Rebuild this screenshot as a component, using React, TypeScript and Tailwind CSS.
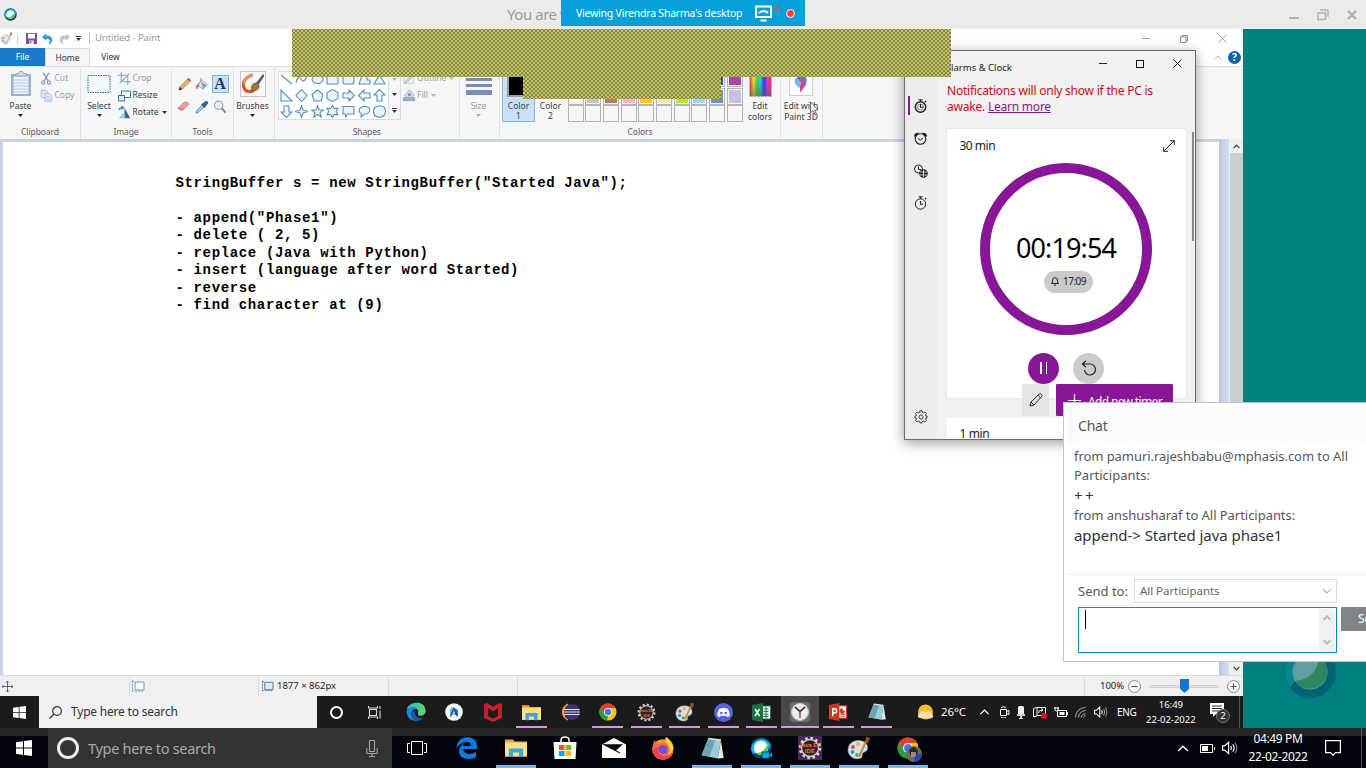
import React from "react";

type P = { children?: React.ReactNode; w?: number; h?: number; vb?: string; className?: string };
const Ic = ({ children, w = 16, h = 16, vb = "0 0 16 16", className = "" }: P) => (
  <svg width={w} height={h} viewBox={vb} fill="none" className={"block shrink-0 " + className}>
    {children}
  </svg>
);

const Tri = ({ c = "#333" }: { c?: string }) => (
  <Ic w={5} h={3} vb="0 0 5 3"><path d="M0 0h5L2.5 3z" fill={c} /></Ic>
);

const Chev = ({ w = 10, h = 6, c = "#888", s = 1.2, up = false }: { w?: number; h?: number; c?: string; s?: number; up?: boolean }) => (
  <Ic w={w} h={h} vb="0 0 10 6"><path d={up ? "M.8 5.2 5 1l4.2 4.2" : "M.8.8 5 5 9.2.8"} stroke={c} strokeWidth={s} /></Ic>
);

const WinLogo = ({ s = 13 }: { s?: number }) => (
  <Ic w={s} h={s}><path d="M0 2.3 7 1.2v6.4H0zM8 1.05 16 0v7.6H8zM0 8.5h7v6.4L0 13.8zM8 8.5h8V16l-8-1.1z" fill="#fff" /></Ic>
);

const Palette = ({ s = 24, o = 1 }: { s?: number; o?: number }) => (
  <Ic w={s} h={s} vb="0 0 24 24">
    <g opacity={o}>
      <path d="M1 14C1 8 6 4 12 4.5c6 .3 9 4 8.500 8-.6 4-4 3-5 5-.8 2 .5 4-2.500 5C7 24 1 20 1 14z" fill="#d5e2ee" stroke="#7f99ad" strokeWidth=".6" />
      <circle cx="6" cy="11" r="1.9" fill="#e0492f" /><circle cx="11" cy="8" r="1.9" fill="#f0b323" />
      <circle cx="5.5" cy="16" r="1.9" fill="#3d8bd6" /><circle cx="10" cy="19" r="1.9" fill="#4bae4f" />
      <path d="m12 21 7-16" stroke="#d08a45" strokeWidth="2.2" /><path d="m18 6 1-5.500 4 1.500-2 5z" fill="#8a552c" />
    </g>
  </Ic>
);

const Folder = ({ w = 22, h = 19 }: { w?: number; h?: number }) => (
  <Ic w={w} h={h} vb="0 0 22 19">
    <path d="M0 1h8l1.500 2H22v15H0z" fill="#e8a92b" /><path d="M0 4h22v14H0z" fill="#fedf85" />
    <path d="M4 10h14v8.500h-4V14H8v4.500H4z" fill="#3aa5dc" />
  </Ic>
);

const Chrome = ({ s = 18 }: { s?: number }) => (
  <Ic w={s} h={s} vb="0 0 20 20">
    <circle cx="10" cy="10" r="9.5" fill="#fbc116" />
    <path d="M1.8 5.200A9.500 9.500 0 0 1 18.300 5.500H10L6 12.300z" fill="#e33b2e" />
    <path d="M1.800 5.200 6 12.300 10 14.500 9 19.500A9.500 9.500 0 0 1 1.800 5.200z" fill="#269f42" />
    <circle cx="10" cy="10" r="4.5" fill="#fff" /><circle cx="10" cy="10" r="3.6" fill="#3f7de8" />
  </Ic>
);

const Notepad = ({ s = 20 }: { s?: number }) => (
  <Ic w={s} h={s} vb="0 0 22 22">
    <path d="M7 1.500 19 3l-3 17.500L.5 17.500z" fill="#9ccdd7" /><path d="M7 1.500 14 2.200 8 19 .5 17.500z" fill="#6aa5b3" />
    <path d="m19 3 2.700 17-5.700.5z" fill="#e6e8e8" /><path d="M7 1.500 19 3" stroke="#ddd" strokeWidth="1.5" />
  </Ic>
);

const Webex = ({ s = 22, cam = false }: { s?: number; cam?: boolean }) => (
  <Ic w={s} h={s} vb="0 0 22 22">
    <circle cx="11" cy="11" r="10.5" fill="#07466a" />
    <path d="M1 12A10.500 10.500 0 0 1 21 8L18 13 3 17z" fill="#04b4e8" />
    <circle cx="11" cy="11" r="7.200" fill="#fff" /><path d="M17 7.500A7 7 0 0 1 6 16c6 0 9-3 11-8.500z" fill="#6cc04a" />
    {cam && <g><rect x="12" y="15" width="7.5" height="6.500" rx="1" fill="#00a8e8" stroke="#02050b" strokeWidth=".6" /><path d="m19 18 3-2.500V21z" fill="#00a8e8" /></g>}
  </Ic>
);

const Gear = ({ s = 18, sq = false }: { s?: number; sq?: boolean }) => (
  <Ic w={s} h={s} vb="0 0 24 24">
    {sq && <path d="M0 0h24v24H0z" fill="#46285f" />}
    <circle cx="12" cy="12" r="10" stroke="#d5d5d5" strokeWidth="2.6" strokeDasharray="2.6 2.64" />
    <circle cx="12" cy="12" r="8.5" stroke="#d5d5d5" strokeWidth="1.3" fill="#2c2127" />
    <text x="12" y="11" fontSize={sq ? 5.6 : 4.6} fontWeight="700" textAnchor="middle" fill="#f2742c" fontFamily="Liberation Sans">Java EE</text>
    <text x="12" y="17.2" fontSize={sq ? 6.2 : 5} fontWeight="700" textAnchor="middle" fill="#f2742c" fontFamily="Liberation Sans">IDE</text>
  </Ic>
);

const Speaker = ({ w = 15, o = false }: { w?: number; o?: boolean }) => (
  <Ic w={w} h={w * 13 / 15} vb="0 0 15 13">
    <path d="M.6 4.500h2L6.200 1.200v10.600L2.600 8.500h-2z" stroke="#fff" strokeWidth="1.1" />
    <path d="M8.200 4.500q1.400 2 0 4" stroke="#fff" strokeWidth="1.1" />
    <path d="M10.200 3q2.300 3.500 0 7" stroke="#fff" strokeWidth="1.1" opacity={o ? 0.6 : 1} />
    <path d="M12.200 1.500q3.300 5 0 10" stroke="#fff" strokeWidth="1.1" opacity=".5" />
  </Ic>
);

/* ---------- Paint ribbon ---------- */
const Group = ({ label, w, children }: { label?: string; w: string; children: React.ReactNode }) => (
  <div className={"flex h-[71px] shrink-0 flex-col border-r border-[#dfe1e4] " + w}>
    <div className="flex h-[58px] w-full">{children}</div>
    <div className="text-center leading-[12px] tracking-[-0.1px] text-[#5a5a5a]">{label}</div>
  </div>
);

const BigBtn = ({ icon, lines, arrow, w, dim = false }: { icon: React.ReactNode; lines: string[]; arrow?: boolean; w: string; dim?: boolean }) => (
  <div className={"flex shrink-0 flex-col items-center " + w + (dim ? " text-[#9a9a9a]" : " text-[#3c3c3c]")}>
    <div className="flex h-[31.5px] items-center pt-[1px]">{icon}</div>
    {lines.map((l) => <div key={l} className="leading-[11px] whitespace-nowrap">{l}</div>)}
    {arrow && <div className="pt-[3px]"><Tri c={dim ? "#aaa" : "#222"} /></div>}
  </div>
);

const Row = ({ icon, t, dim, arrow }: { icon: React.ReactNode; t: string; dim?: boolean; arrow?: boolean }) => (
  <div className={"flex h-[17px] items-center whitespace-nowrap " + (dim ? "text-[#9c9c9c]" : "text-[#3c3c3c]")}>
    <div className="flex w-[14.5px] justify-start">{icon}</div>{t}
    {arrow && <div className="ml-[3px]"><Tri c={dim ? "#bbb" : "#333"} /></div>}
  </div>
);

const shapePaths = [
  "M1 2l11 9", "M1 10Q3 1 6 6T12 3", "M6.5 2.5a5.5 4 0 1 0 .1 0z", "M1 3h11v8H1z", "M3 3h7q2 0 2 2v4q0 2-2 2H3q-2 0-2-2V5q0-2 2-2z", "M1 11 4 2h5v5h3v4z", "M6.5 2 12 11H1z",
  "M1 1v11h11z", "M6.5.5 12 6.5l-5.5 6-5.5-6z", "M6.5 1 12 5.2 10 12H3L1 5.2z", "M6.5.5 12 3.5v6L6.5 12.5 1 9.5v-6z", "M1 4h6V1l5.5 5.5L7 12V9H1z", "M12 4H6V1L.5 6.5 6 12V9h6z", "M4 12V6H1L6.5.5 12 6H9v6z",
  "M4 1v6H1l5.5 5.5L12 7H9V1z", "M6.5.5 8 5l4.5 1.5L8 8l-1.500 4.500L5 8 .5 6.500 5 5z", "M6.5.5 8 5h4.500L9 7.700l1.400 4.500-3.900-2.700-3.900 2.700L4 7.700.5 5H5z", "M6.5.5 8.300 3.400H12L10.200 6.500 12 9.600H8.300L6.500 12.500 4.700 9.600H1L2.800 6.500 1 3.400h3.700z", "M1 1.500h11v7.500H6L3.500 12V9H1z", "M6.5 1.500c7 0 7 7.500 0 7.500L3 12l.5-3.500C-.5 7 .5 1.500 6.500 1.500z", "M4 1.500q2.500-1.500 5 0 3 0 3 3 1 2 0 4-1 3-3 3-2.500 1.500-5 0-3 0-3-3-1-2 0-4 0-3 3-3z",
];

const palette = [
  "#000000", "#7f7f7f", "#880015", "#ed1c24", "#ff7f27", "#fff200", "#22b14c", "#00a2e8", "#3f48cc", "#a349a4",
  "#ffffff", "#c3c3c3", "#b97a57", "#ffaec9", "#ffc90e", "#efe4b0", "#b5e61d", "#99d9ea", "#7092be", "#c8bfe7",
  ...Array(10).fill("#f5f6f7"),
];

const Ribbon = () => (
  <div className="flex h-[73px] border-t border-[#dcdde0] bg-[#f5f6f7] pt-[1px] text-[8.5px]">
    <Group w="w-[81px]" label="Clipboard">
      <BigBtn w="w-[40px] pl-[1px]" lines={["Paste"]} arrow icon={
        <Ic w={22} h={26} vb="0 0 22 26"><path d="M1 3h20v22H1z" fill="#9fb0cf" /><path d="M3.5 5.500h15v17.500h-15z" fill="#eef3fb" /><path d="M3.5 9h15M3.5 12h15M3.5 15h15M3.5 18h15M3.5 21h15" stroke="#b6c9e6" /><path d="M6 5V2.500h2.500L9.500.5h3l1 2H16V5z" fill="#d6dbe3" stroke="#8492a8" strokeWidth=".7" /></Ic>} />
      <div className="pt-[2px]">
        <Row dim t="Cut" icon={<Ic w={13} h={13}><path d="m4 1 6 10M11 1 5 11" stroke="#8da0bd" strokeWidth="1.8" /><circle cx="4" cy="13" r="2" stroke="#8da0bd" strokeWidth="1.4" /><circle cx="11" cy="13" r="2" stroke="#8da0bd" strokeWidth="1.4" /></Ic>} />
        <Row dim t="Copy" icon={<Ic w={13} h={13}><path d="M1.5 1.500h6l2 2v7h-8z" fill="#eef2f9" stroke="#9dafcd" /><path d="M6.5 5.500h5l3 3v6.500h-8z" fill="#eef2f9" stroke="#9dafcd" /><path d="M8 9h4M8 11h5M8 13h5M3 4h3M3 6h3" stroke="#9dafcd" strokeWidth=".8" /></Ic>} />
      </div>
    </Group>
    <Group w="w-[91px]" label="Image">
      <BigBtn w="w-[36px]" lines={["Select"]} arrow icon={<Ic w={24} h={20} vb="0 0 24 20"><path d="M1 1.500h22v17H1z" fill="#f3f7fc" stroke="#2f6499" strokeDasharray="1.5 1" /></Ic>} />
      <div className="pt-[2px] pl-[1px]">
        <Row dim t="Crop" icon={<Ic w={13} h={13}><path d="M4 0v12h12M0 4h12v12M2 14 14 2" stroke="#8ea4c0" strokeWidth="1.3" /></Ic>} />
        <Row t="Resize" icon={<Ic w={13} h={12} vb="0 0 13 12"><path d="M3.5 1h9v6.500h-9z" fill="#fff" stroke="#3b74ad" /><path d="M.5 5.500h6V11h-6z" fill="#dceafa" stroke="#3b74ad" /></Ic>} />
        <Row arrow t="Rotate" icon={<Ic w={13} h={13}><path d="M1 15h6V8z" fill="#9bc0df" /><path d="M8 15V2l7 13z" fill="#35679b" /><path d="M1 5q1-3 5-3M4 0l3 2-3 2" stroke="#1d86d4" strokeWidth="1.3" /></Ic>} />
      </div>
    </Group>
    <Group w="w-[62px]" label="Tools">
      <div className="grid h-[58px] grid-cols-[18px_18px_18px] grid-rows-[22px_23px] place-items-center content-start pt-[5px] pl-[3px]">
        <Ic w={15} h={15}><path d="M2 14 3 10.500 12 1.500l2.500 2.500L5.500 13z" fill="#e8b469" stroke="#8b6843" strokeWidth=".7" /><path d="m2 14 1-3.500L5.500 13z" fill="#333" /><path d="m11 2.500 2.500 2.500L15 3.500 12.500 1z" fill="#a85a6a" /></Ic>
        <Ic w={14} h={14}><path d="m8 3 6 6-5 5-6-5z" fill="#dbe8f4" stroke="#8a97a8" /><path d="M5 6 1 10q0 4 2 4 1-3 2-5z" fill="#e0764a" /><path d="m7 6 6 3-4 4z" fill="#6f9fd0" /><path d="M7 1q-2 3 1 6" stroke="#999" /></Ic>
        <div className="flex h-[18px] w-[17px] items-center justify-center border border-[#84b2dd] bg-[#c9e0f7] font-['Liberation_Serif'] text-[16px] leading-none font-bold text-[#1d3350]">A</div>
        <Ic w={14} h={15}><path d="M1 10 8 3q4-1 6 2l-7 7q-4 1-6-2z" fill="#ee9a9c" stroke="#c67478" strokeWidth=".7" /><path d="M1 10q3-1 6 2" stroke="#c67478" /></Ic>
        <Ic w={14} h={14}><path d="m1 15 1-3 6-6 2 2-6 6z" fill="#a9d0ef" stroke="#45698c" strokeWidth=".8" /><path d="m7 5 4 4 1-1 .5-1.500L15 4q.5-3-3-3L9.500 3.500 8 4z" fill="#2b5d93" /></Ic>
        <Ic w={14} h={14}><circle cx="6.5" cy="6" r="4.7" fill="#e7f1fa" stroke="#97a5b5" strokeWidth="1.3" /><path d="m10 9.500 4.500 5" stroke="#a98366" strokeWidth="2.4" /></Ic>
      </div>
    </Group>
    <Group w="w-[40.5px]">
      <BigBtn w="w-[37px]" lines={["Brushes"]} arrow icon={
        <Ic w={26} h={26} vb="0 0 27 27" className="border border-[#c3c7cc]"><path d="M0 0h27v27H0z" fill="#fcf7f3" /><path d="M13 3Q1 8 3 16q1 7 9 6l5-5" stroke="#da5427" strokeWidth="3.5" /><path d="M13 3Q4 6 3 13" stroke="#f29b74" strokeWidth="2" /><path d="m25 2-8 10 3 2 6-9z" fill="#536273" /><path d="M12 16q2-5 7-3 3 4-1 7-5 3-7 1 1-2 1-5z" fill="#a3703f" stroke="#765230" /></Ic>} />
    </Group>
    <Group w="w-[185.5px]" label="Shapes">
      <div className="mt-[3px] ml-[3px] flex h-[49px] w-[123px] shrink-0 border border-[#d8dce1] bg-white">
        <div className="grid w-[109px] grid-cols-7 grid-rows-3 place-items-center">
          {shapePaths.map((d, i) => <Ic key={i} w={13} h={13} vb="0 0 13 13"><path d={d} fill={i > 1 ? "#eaf4fb" : "none"} stroke="#5b8fb5" strokeWidth="1.1" /></Ic>)}
        </div>
        <div className="flex flex-1 flex-col items-center justify-around border-l border-[#d8dce1] bg-[#f4f6f9]">
          <Tri c="#bbb" /><Tri /><div className="flex flex-col items-center gap-[1px]"><div className="h-[1px] w-[5px] bg-[#345]" /><Tri c="#345" /></div>
        </div>
      </div>
      <div className="pt-[2px] pl-[2px]">
        <Row dim arrow t="Outline" icon={<Ic w={13} h={13}><path d="M1 3h12v11H1z" stroke="#bcc8d8" /><path d="m2 14 1-3 10-10 2 2L5 13z" fill="#c9d3e0" stroke="#a9b6c9" /></Ic>} />
        <Row dim arrow t="Fill" icon={<Ic w={13} h={13}><path d="m8 1 6 6-5 6-7-5z" fill="#d3dbe7" stroke="#9faec6" /><path d="M0 10h15v5H0z" fill="#9cabc7" /><circle cx="8" cy="7" r="2" fill="#8597b7" /></Ic>} />
      </div>
    </Group>
    <Group w="w-[40px]">
      <BigBtn dim w="w-[37px]" lines={["Size"]} arrow icon={
        <div className="flex h-[27px] w-[26px] flex-col justify-end gap-[3px] pb-[3px]"><div className="h-[3px] bg-[#7a8cb3]" /><div className="h-[3px] bg-[#7a8cb3]" /><div className="h-[5px] bg-[#7a8cb3]" /></div>} />
    </Group>
    <Group w="w-[281px]" label="Colors">
      <div className="mt-[3px] ml-[2px] flex h-[51px] w-[33px] shrink-0 flex-col items-center border border-[#8ab8e6] bg-[#c9e0f7] text-[#3c3c3c]">
        <div className="mt-[2px] mb-[3px] h-[23px] w-[23px] shrink-0 border-2 border-[#9a9da0] bg-black" />
        <div className="leading-[11px]">Color</div><div className="leading-[10px]">1</div>
      </div>
      <div className="mt-[3px] flex h-[51px] w-[31px] shrink-0 flex-col items-center text-[#3c3c3c]">
        <div className="mt-[5px] mb-[3px] h-[21px] w-[18px] shrink-0 border border-[#aaa] bg-white" />
        <div className="leading-[11px]">Color</div><div className="leading-[10px]">2</div>
      </div>
      <div className="mt-[2px] ml-[1.5px] grid w-[177px] shrink-0 grid-cols-10 grid-rows-[17.5px_17.5px_17.5px]">
        {palette.map((c, i) => <div key={i} className="h-[17px] w-[16px] border border-[#b4b4b4] p-[1px]"><div className="h-full w-full" style={{ background: c }} /></div>)}
      </div>
      <BigBtn w="w-[31px]" lines={["Edit", "colors"]} icon={
        <div className="mt-[2px] h-[23px] w-[23px] border border-[#bbb] bg-[linear-gradient(to_bottom,transparent_20%,rgba(90,90,90,.55)),linear-gradient(to_right,#f33,#fd3,#3d4,#2cd,#33f,#d3d,#f34)]" />} />
    </Group>
    <Group w="w-[42px]">
      <BigBtn w="w-[40px]" lines={["Edit with", "Paint 3D"]} icon={
        <Ic w={24} h={24} vb="0 0 25 25" className="border border-[#ccc] bg-white"><path d="M12.5 1C19 3 20 8 18 13l-6 9-1-6c-5-3-6-6-5-9z" fill="#5d6fe4" /><path d="M6 7q6-3 12 6l-6 9-1-6Q5 12 6 7z" fill="#d4467f" /><path d="M6 7q4-1 7 5l-2 4Q5 12 6 7z" fill="#64c3ee" /></Ic>} />
    </Group>
  </div>
);

const PaintWindow = () => (
  <div className="flex h-[667px] flex-col bg-white">
    <div className="flex h-[19px] items-center text-[9.5px] text-[#999]">
      <Palette s={13} o={0.7} />
      <div className="ml-[4px] h-[10px] w-px bg-[#ccc]" />
      <Ic w={11} h={11} className="ml-[8px]"><path d="M0 0h16v16H0z" fill="#7553a0" /><path d="M3 1h10v7H3zM5 11h6v5H5z" fill="#fff" /><path d="M6 12h2v3H6z" fill="#7553a0" /></Ic>
      <Ic w={11} h={12} className="ml-[5px]"><path d="m0 5 6-5v3q9-1 9 7-1 5-6 6 3-4 2-6-1-2-5-2v3z" fill="#3b9edb" /></Ic>
      <Ic w={11} h={12} className="ml-[6px]"><path d="m16 5-6-5v3Q1 2 1 10q1 5 6 6-3-4-2-6 1-2 5-2v3z" fill="#bcc5d4" /></Ic>
      <div className="ml-[6px] flex flex-col items-center gap-[1px]"><div className="h-px w-[5px] bg-[#333]" /><Tri /></div>
      <div className="ml-[8px] h-[11px] w-px bg-[#bbb]" />
      <span className="ml-[5px] tracking-[-0.08px] whitespace-nowrap">Untitled - Paint</span>
      <div className="ml-auto flex items-center pr-[16px]">
        <div className="h-px w-[8px] bg-[#999]" />
        <Ic w={8} h={8} vb="0 0 8 8" className="ml-[30px]"><path d="M.5 2h5.500v5.500H.5zM2 2V.5h5.500V6H6" stroke="#888" /></Ic>
        <Ic w={9} h={9} vb="0 0 9 9" className="ml-[30px]"><path d="m.5.5 8 8m0-8-8 8" stroke="#999" /></Ic>
      </div>
    </div>
    <div className="flex h-[18px] text-center text-[8.5px] leading-[18px] text-[#333]">
      <div className="w-[45px] bg-[#1979ca] text-white">File</div>
      <div className="w-[45px] border-x border-t border-[#dcdde0] bg-[#f5f6f7] leading-[17px]">Home</div>
      <div className="w-[41px]">View</div>
      <div className="ml-auto flex items-center gap-[6px] pr-[2px]">
        <Chev up w={8} h={5} c="#aaa" />
        <div className="h-[13px] w-[13px] rounded-full bg-[#0f62ad] text-[10px] leading-[13px] font-bold text-white">?</div>
      </div>
    </div>
    <Ribbon />
    <div className="flex h-[536px] bg-[#c8d2e6]">
      <div className="mt-[3px] ml-[3px] w-[1215.5px] bg-white pt-[32.5px] pl-[172.5px]">
        <pre className="m-0 font-['Liberation_Mono',monospace] text-[14px] leading-[17.5px] font-bold tracking-[0.64px] text-black">{`StringBuffer s = new StringBuffer("Started Java");

- append("Phase1")
- delete ( 2, 5)
- replace (Java with Python)
- insert (language after word Started)
- reverse
- find character at (9)`}</pre>
      </div>
      <div className="w-[10.5px] bg-gradient-to-r from-[#bac7df] to-[#d5dff0]" />
      <div className="flex flex-1 flex-col items-center bg-[#f0f0f0]">
        <div className="flex h-[14px] items-center"><Chev up w={7} h={5} c="#444" s={1.8} /></div>
        <div className="w-[13px] flex-1 bg-[#cdcdcd]" />
        <div className="flex h-[14px] items-center"><Chev w={7} h={5} c="#444" s={1.8} /></div>
      </div>
    </div>
    <div className="flex h-[21px] items-center border-t border-[#d9d9d9] bg-[#f0f0f0] text-[9.5px] text-[#222]">
      <div className="flex h-full w-[130px] items-center border-r border-[#dcdcdc] pl-[2px]"><Ic w={11} h={11} vb="0 0 11 11"><path d="M5.5 0v11M0 5.500h11M4 1.500 5.500 0 7 1.500M4 9.500 5.500 11 7 9.500M1.500 4 0 5.500 1.500 7M9.500 4 11 5.500 9.500 7" stroke="#435a74" strokeWidth=".9" /></Ic></div>
      <div className="flex h-full w-[129px] items-center border-r border-[#dcdcdc] pl-[2px]"><Ic w={13} h={12} vb="0 0 13 12"><path d="M3 2h9v8H3z" fill="#f7fafc" stroke="#8495aa" /><path d="M.5 1v10M0 1h2M0 11h12" stroke="#8495aa" strokeDasharray="2 1" /></Ic></div>
      <div className="flex h-full w-[130px] items-center gap-[3px] border-r border-[#dcdcdc] pl-[3px] whitespace-nowrap"><Ic w={12} h={12} vb="0 0 13 12"><path d="M3 2h9v8H3z" fill="#dcebf6" stroke="#52708f" /><path d="M.5 1v10M0 1h2M0 11h12" stroke="#52708f" strokeDasharray="2 1" /></Ic><span>1877 × 862px</span></div>
      <div className="h-full w-[129px] border-r border-[#dcdcdc]" />
      <div className="ml-auto flex h-full w-[159px] items-center border-l border-[#dcdcdc] pl-[15px]">
        <span className="w-[28px]">100%</span>
        <Ic w={13} h={13} vb="0 0 13 13"><circle cx="6.5" cy="6.5" r="6" stroke="#888" fill="#f8f8f8" /><path d="M3.5 6.500h6" stroke="#555" strokeWidth="1.2" /></Ic>
        <div className="relative mx-[9px] h-[3px] w-[68px] border border-[#d0d0d0] bg-[#e6e6e6]"><Ic w={9} h={14} vb="0 0 9 14" className="absolute top-[-7px] left-[29px]"><path d="M0 0h9v10l-4.500 4L0 10z" fill="#0b76d6" /></Ic></div>
        <Ic w={13} h={13} vb="0 0 13 13"><circle cx="6.5" cy="6.5" r="6" stroke="#888" fill="#f8f8f8" /><path d="M3.5 6.500h6m-3-3v6" stroke="#555" strokeWidth="1.2" /></Ic>
      </div>
    </div>
  </div>
);

/* ---------- Shared-desktop taskbar ---------- */
const remoteApps: { el: React.ReactNode; line?: boolean; on?: boolean }[] = [
  { el: <Ic w={20} h={20} vb="0 0 20 20"><path d="M.5 10A9.500 9.500 0 0 1 10 .5q8.500 0 9.500 8 0 5-5.500 5-3-.3-1.700-2.300Q13 7 9 7q-4 1-3.500 5.500 1 5.500 7 6Q2 20 .5 10z" fill="#1a86d8" /><path d="M.8 7.500C3-1 18-2 19.500 8.500q0 5-5.500 5-3-.3-1.700-2.300Q12.500 5.500 7.500 5 2.500 5 .8 7.500z" fill="#3cc4a4" /><path d="M11 .5q8 1 8.500 8 0 5-5.500 5-2 0-1.700-1.500Q17 8 11 .5z" fill="#5fd267" /><path d="M6 9q-2.500 8 4.500 9.500 4 .8 7.500-3-1.500.8-4 .5-5-.8-5-5.500Q8 8 6 9z" fill="#1458a8" /></Ic> },
  { el: <Ic w={18} h={18} vb="0 0 18 18"><circle cx="9" cy="9" r="8.8" fill="#f4f8fa" /><path d="M5 12V6.500Q6 4 8.500 4v8" fill="#63b5e8" /><path d="M9.5 12V5l3.500 2v5z" fill="#2e78c5" /><path d="m5.500 13.500 3.500-8 3.500 8" stroke="#154a88" strokeWidth="1.300" /></Ic> },
  { el: <Ic w={18} h={19} vb="0 0 18 19"><path d="m0 1 3-1 6 4 6-4 3 1v14l-9 4-9-4zm4 4v8l5 2.500 5-2.500V5L9 8.500z" fill="#c3222c" fillRule="evenodd" /></Ic> },
  { el: <Folder w={19} h={17} />, line: true },
  { el: <Ic w={20} h={18} vb="0 0 20 18"><path d="M8 1a8.500 8.500 0 0 0 0 16Q0 13 8 1z" fill="#f6a11b" stroke="#f6a11b" /><circle cx="12" cy="9" r="8" fill="#3d3270" /><path d="M4 6.500h15.500M4 9h16M4 11.500h15.500" stroke="#e5e3f2" strokeWidth="1.2" /></Ic> },
  { el: <Chrome />, line: true },
  { el: <Gear s={19} />, line: true },
  { el: <Palette s={20} />, line: true },
  { el: <Ic w={19} h={19} vb="0 0 19 19"><circle cx="9.5" cy="9.5" r="9.5" fill="#5462e0" /><path d="M5 6q4.500-2 9 0 2 3.500 1.700 7-2 1.300-2.700 1l-.8-1.400q-2.700.7-5.400 0L6 14q-1-.1-2.700-1Q3 9.500 5 6z" fill="#fff" /><circle cx="7.3" cy="10" r="1.3" fill="#5462e0" /><circle cx="11.7" cy="10" r="1.3" fill="#5462e0" /></Ic>, line: true },
  { el: <Ic w={19} h={19} vb="0 0 19 19"><path d="M10 3h8.500v13H10z" fill="#fff" stroke="#237a4b" /><path d="M11.5 6h5M11.5 8.500h5M11.5 11h5M11.5 13.500h5M14 4v11" stroke="#237a4b" /><path d="m0 2 11-2v19L0 17z" fill="#1d7044" /><path d="m3 6 4.500 7M7.500 6 3 13" stroke="#fff" strokeWidth="1.5" /></Ic>, line: true },
  { el: <Ic w={20} h={20} vb="0 0 20 20"><rect width="20" height="20" rx="4" fill="#6a6f74" /><circle cx="10" cy="10" r="8.5" fill="#e9ebed" stroke="#b8bdc1" /><path d="m5 5 5 4.500L15 5" stroke="#222" strokeWidth="1.6" /><path d="M10 9v7" stroke="#a33" strokeWidth="1.4" /></Ic>, line: true, on: true },
  { el: <Ic w={18} h={18} vb="0 0 19 19"><path d="M10 3h8.500v13H10z" fill="#fff" stroke="#c9391d" /><path d="M12 12h5M12 14h5M14 6a2.500 2.500 0 1 0 2.500 2.500H14z" stroke="#c9391d" fill="#c9391d" /><path d="m0 2 11-2v19L0 17z" fill="#ca3a1e" /><path d="M4 14V6h2q2 0 2 2.300T6 10.500H4" stroke="#fff" strokeWidth="1.5" /></Ic>, line: true },
  { el: <Notepad s={18} />, line: true },
];

const RemoteTaskbar = () => (
  <div className="flex h-[32px] bg-[#1b1b1b] text-white">
    <div className="flex w-[39px] shrink-0 items-center justify-center"><WinLogo /></div>
    <div className="flex w-[278px] shrink-0 items-center bg-[#f1f1f1] pl-[10px] text-[12px] text-[#333]">
      <Ic w={13} h={13} vb="0 0 13 13"><circle cx="8" cy="5" r="4.3" stroke="#333" strokeWidth="1.2" /><path d="M5 8 .5 12.500" stroke="#333" strokeWidth="1.2" /></Ic>
      <span className="ml-[9px] tracking-[-0.2px] whitespace-nowrap">Type here to search</span>
    </div>
    <div className="flex w-[39px] shrink-0 items-center justify-center"><div className="h-[13px] w-[13px] rounded-full border-[2.5px] border-white" /></div>
    <div className="flex w-[38px] shrink-0 items-center justify-center"><Ic w={14} h={13} vb="0 0 14 13"><path d="M1.5 3.500h7v6h-7zM.5 0v2h9V0M.5 13v-2h9v2M12 4.500v8M12 0v3" stroke="#ddd" strokeWidth="1.1" /></Ic></div>
    <div className="ml-[2.8px] flex shrink-0">
      {remoteApps.map((a, i) => (
        <div key={i} className={"flex w-[38.4px] flex-col items-center " + (a.on ? "bg-[#484848]" : "")}>
          <div className="flex h-[30px] items-center pt-[2px]">{a.el}</div>
          {a.line && <div className={"h-[2px] bg-[#e58fe9] " + (a.on ? "w-full" : "w-[31px]")} />}
        </div>
      ))}
    </div>
    <div className="flex min-w-0 flex-1 items-center text-[11px]">
      <Ic w={17} h={16} vb="0 0 17 16" className="ml-[21px]"><circle cx="8.5" cy="8" r="7.5" fill="#fbb929" /><path d="M2 14q-3-3 1-5 2-4 6-1 5-2 6 2 3 3-1 4.500z" fill="#f6dca8" /></Ic>
      <span className="ml-[7px] w-[38px] shrink-0 text-[11.5px] tracking-[-0.05px]">26°C</span>
      <Chev up w={11} h={6} c="#fff" />
      <div className="ml-[10px] flex w-[108px] shrink-0 items-center justify-between">
        <Ic w={10} h={12} vb="0 0 10 12"><path d="M.5 3.500h6v6h-6zM6.5 5.500 9 4.500v4l-2.500-1M1 1.500q2.500-1.500 5 0M1 11.500q2.500 1 5 0" stroke="#fff" /></Ic>
        <Ic w={8} h={13} vb="0 0 8 13"><rect x="1" width="6" height="9" rx="1.5" fill="#eee" /><path d="M0 8h8v2H5v2h1v1H2v-1h1v-2H0z" fill="#ccc" /></Ic>
        <Ic w={14} h={13} vb="0 0 14 13"><path d="M.5 2.500 4 1.500V10L.5 11zM4 1.500h8.500v8H4" stroke="#eee" /><path d="M5.5 7q0-3 4-3M8 2.500 10 4 8 5.500" stroke="#eee" /><circle cx="11" cy="10" r="3" fill="#e81123" /></Ic>
        <Ic w={14} h={11} vb="0 0 14 11"><path d="M3.5 3.500h9v6h-9zM13.5 5v3" stroke="#fff" /><path d="M5.5 5h5v3h-5z" fill="#fff" /><path d="M0 1h5M1 0v3q1 2 3 0V0" stroke="#fff" /></Ic>
        <Ic w={11} h={11} vb="0 0 11 11"><path d="M.5 10.500Q1 1 10.500.5M3.500 10.500Q4 4 10.500 3.500M6 10.500Q6.500 7 10.500 6.500M8.500 10.500q0-1.500 2-2" stroke="#aaa" /></Ic>
        <Speaker w={14} o />
      </div>
      <span className="ml-[9px] w-[25px] shrink-0 text-[10px] tracking-[-0.3px]">ENG</span>
      <div className="w-[58px] shrink-0 text-center text-[9.5px] leading-[15px] whitespace-nowrap">16:49<br />22-02-2022</div>
      <div className="relative ml-[10px] h-[18px] w-[20px] shrink-0">
        <Ic w={14} h={14} vb="0 0 14 14"><path d="M0 0h14v11H6l-3 3v-3H0z" fill="#fff" /><path d="M2 3h10M2 5.500h10M2 8h7" stroke="#333" strokeWidth="1.2" /></Ic>
        <div className="absolute top-[6px] left-[6px] h-[14px] w-[14px] rounded-full border border-[#777] bg-[#333] text-center text-[9.5px] leading-[12px]">2</div>
      </div>
      <div className="mr-[3px] ml-auto h-full w-px bg-[#555]" />
    </div>
  </div>
);

/* ---------- Alarms & Clock ---------- */
const Watch = ({ bold = false }: { bold?: boolean }) => (
  <Ic w={13} h={14} vb="0 0 13 14"><circle cx="6.5" cy="8" r="5.2" stroke="#222" strokeWidth={bold ? 1.5 : 1} />{bold && <circle cx="6.5" cy="8" r="3" stroke="#222" strokeWidth=".5" />}<path d="M6.5 5v3.200H9M4.500.8h4M6.500 1v2M11 2l1.300 1.300" stroke="#222" strokeWidth="1.1" /></Ic>
);

const ClockWindow = () => (
  <div className="absolute top-[50px] left-[904px] flex h-[390px] w-[292px] overflow-hidden border border-[#6c6c6c] bg-[#f1f1f1] shadow-[0_3px_12px_rgba(0,0,0,.4)]">
    <div className="flex w-[32px] shrink-0 flex-col items-center bg-[#ededed] pt-[48px] pr-[1px]">
      <div className="relative"><div className="absolute top-[-3px] left-[-6px] h-[19px] w-[2px] bg-[#881798]" /><Watch bold /></div>
      <Ic w={13} h={13} vb="0 0 13 13" className="mt-[19px]"><circle cx="6.5" cy="7" r="5.3" stroke="#222" strokeWidth="1.1" /><path d="M4 6.500l2.500 1.500 2.500-2" stroke="#222" /><path d="M.3 5Q-.5.3 5.500.8zM12.700 5Q13.500.3 7.500.8z" fill="#111" /></Ic>
      <Ic w={14} h={14} vb="0 0 14 14" className="mt-[19px]"><circle cx="4.5" cy="5" r="4" stroke="#222" /><path d="M4.5 2.500V5.500H7" stroke="#222" /><circle cx="9.5" cy="9.5" r="4.3" fill="#222" /><path d="M6 8h7M6 11h7M9.500 6v7" stroke="#eee" strokeWidth=".8" /></Ic>
      <div className="mt-[18px]"><Watch /></div>
      <Ic w={14} h={14} vb="0 0 24 26" className="mt-auto mb-[15px]"><path d="M10 1.500h4l.6 3 2 .9 2.700-1.700 2.800 2.800L20.400 9.200l.8 2h2v3.600h-2l-.8 2 1.700 2.700-2.800 2.800-2.700-1.700-2 .9-.6 2.500h-4l-.6-2.500-2-.9-2.700 1.700-2.800-2.800 1.700-2.700-.9-2H1v-3.600h1.700l.9-2L1.900 6.500l2.800-2.800 2.700 1.700 2-.9z" stroke="#222" strokeWidth="1.6" /><circle cx="12" cy="13" r="3.8" stroke="#222" strokeWidth="1.6" /></Ic>
    </div>
    <div className="flex flex-1 flex-col pl-[10px]">
      <div className="flex h-[28px] shrink-0 items-start pt-[8px] text-[9.5px] leading-[17px] text-[#222]">
        <span className="ml-[-2px] w-[80px] whitespace-nowrap">Alarms &amp; Clock</span>
        <div className="ml-auto flex items-center gap-[29px] pr-[13px]">
          <div className="h-px w-[8px] bg-[#222]" />
          <div className="h-[8px] w-[8px] border border-[#111]" />
          <Ic w={9} h={9} vb="0 0 9 9"><path d="m.5.5 8 8m0-8-8 8" stroke="#222" /></Ic>
        </div>
      </div>
      <div className="mt-[4px] shrink-0 text-[12px] leading-[16px] tracking-[-0.22px] whitespace-nowrap text-[#d00a12]"><div>Notifications will only show if the PC is</div><div>awake. <span className="text-[#881798] underline">Learn more</span></div></div>
      <div className="relative mt-[13.5px] flex h-[269px] w-[239px] shrink-0 flex-col items-center rounded-[2px] bg-white pr-[1px] shadow-[0_0_2px_rgba(0,0,0,.15)]">
        <div className="flex h-[34px] w-full shrink-0 items-center justify-between pr-[10px] pl-[12.5px] text-[12px] text-[#222]">
          <span className="tracking-[-0.5px]">30 min</span>
          <Ic w={12} h={12} vb="0 0 12 12"><path d="M.7 11.300 11.300.7M7 .7h4.300V5M.7 7v4.300H5" stroke="#222" /></Ic>
        </div>
        <div className="flex h-[172px] w-[172px] shrink-0 flex-col items-center rounded-full border-[10px] border-[#881798] pt-[56px]">
          <div className="text-[27px] leading-[38px] tracking-[-0.9px] whitespace-nowrap text-black">00:19:54</div>
          <div className="mt-[4px] ml-[5px] flex h-[22px] w-[49px] items-center justify-center gap-[4px] rounded-full bg-[#cbcbcb] text-[10px] text-[#222]">
            <Ic w={8} h={9} vb="0 0 8 9"><path d="M.5 6.500h7L6.500 5V3.200a2.500 2.500 0 0 0-5 0V5zM3 8.200h2" stroke="#222" /></Ic><span className="tracking-[-0.5px]">17:09</span>
          </div>
        </div>
        <div className="mt-[18px] flex gap-[14px]">
          <div className="flex h-[31px] w-[31px] items-center justify-center gap-[4px] rounded-full bg-[#881798]"><div className="h-[12px] w-[1.5px] bg-white" /><div className="h-[12px] w-[1.5px] bg-white" /></div>
          <div className="flex h-[31px] w-[31px] items-center justify-center rounded-full bg-[#cbcbcb]"><Ic w={16} h={16}><path d="M1.5 4H9a5.500 5.500 0 1 1-5.500 6M5 .8 1.500 4 5 7.200" stroke="#222" strokeWidth="1.2" /></Ic></div>
        </div>
      </div>
      <div className="mt-[20px] h-[22px] w-[239px] shrink-0 bg-white pt-[8px] pl-[12.5px] text-[12px] leading-[16px] tracking-[-0.4px] text-[#222]">1 min</div>
    </div>
    <div className="absolute top-[81px] right-[1px] h-[109px] w-[2px] bg-[#8a8a8a]" />
    <div className="absolute top-[333px] left-[117px] flex gap-[7px]">
      <div className="flex h-[32px] w-[27px] items-center justify-center bg-[#e5e5e5]"><Ic w={14} h={14} vb="0 0 14 14"><path d="M1 13l1-4L10 1.200q1.500-1 2.500.3t0 2.200L5 12z M9 2.200 11.800 5M2 9l3 3" stroke="#222" /></Ic></div>
      <div className="flex h-[32px] w-[117px] items-center rounded-[1px] bg-[#881798] pt-[1px] pl-[12px] text-[12px] whitespace-nowrap text-white"><Ic w={13} h={13} vb="0 0 13 13"><path d="M6.5 0v13M0 6.500h13" stroke="#fff" strokeWidth="1.2" /></Ic><span className="ml-[7px] pt-[2px] tracking-[-0.65px]">Add new timer</span></div>
    </div>
  </div>
);

/* ---------- Chat ---------- */
const Chat = () => (
  <div className="absolute top-[402px] left-[1063px] flex h-[260px] w-[330px] flex-col border border-[#c4c4c4] bg-white pt-[4px] pl-[4px] text-[#585858]">
    <div className="h-[36px] bg-[#fafafa] pl-[10px] text-[14px] leading-[38px] tracking-[-0.2px]">Chat</div>
    <div className="h-[132px] border-b border-[#ececec] pt-[4px] pl-[6px] text-[13px] leading-[19px] whitespace-nowrap">
      <div className="tracking-[-0.06px]">from pamuri.rajeshbabu@mphasis.com to All</div>
      <div>Participants:</div>
      <div className="text-[15px] leading-[21px] tracking-[2.5px] text-[#333]">++</div>
      <div className="tracking-[-0.04px]">from anshusharaf to All Participants:</div>
      <div className="text-[15px] leading-[21px] tracking-[-0.05px] text-[#333]">append-&gt; Started java phase1</div>
    </div>
    <div className="mt-[4px] flex h-[24px] pl-[10px]">
      <div className="w-[56px] text-[13px] leading-[24px]">Send to:</div>
      <div className="flex w-[203px] items-center justify-between border border-[#dadada] pr-[4px] pl-[5px] text-[11.5px] text-[#666]"><span className="tracking-[-0.05px]">All Participants</span><Chev c="#b5b5b5" /></div>
    </div>
    <div className="mt-[4px] flex pl-[10px]">
      <div className="flex h-[46px] w-[259px] shrink-0 border border-[#0b8ec4] p-px">
        <div className="mt-[1px] ml-[5px] h-[19px] w-px bg-black" />
        <div className="ml-auto flex w-[16px] flex-col items-center justify-between bg-[#f0f0f0] py-[6px]"><Chev up w={8} h={6} c="#b9b9b9" s={2.3} /><Chev w={8} h={6} c="#b9b9b9" s={2.3} /></div>
      </div>
      <div className="ml-[4px] h-[24px] w-[60px] shrink-0 rounded-[1px] bg-[#828385] pl-[17px] text-[12px] leading-[24px] text-white">Send</div>
    </div>
  </div>
);

/* ---------- Local taskbar ---------- */
const localApps: { el: React.ReactNode; line?: boolean }[] = [
  { el: <Ic w={21} h={22} vb="0 0 21 22"><path d="M0 11Q2 0 12 0q9 1 9 9v3H7q1 5 7 5 3 0 6-2v5Q17 22 13 22 3 22 3 14q0-5 5-7-1 1-1 2h8q0-4-4-4-6 0-11 6z" fill="#0a7bdc" /></Ic> },
  { el: <Folder w={22} h={20} />, line: true },
  { el: <Ic w={24} h={24} vb="0 0 24 24"><path d="M8 7V4q0-3 4-3t4 3v3" stroke="#fff" strokeWidth="1.5" /><path d="M.5 6h23l-1 17h-21z" fill="#fff" /><path d="M6 9h5.500v5H6z" fill="#f05125" /><path d="M12.5 9H18v5h-5.500z" fill="#80bb03" /><path d="M6 15h5.500v5H6z" fill="#04a5ef" /><path d="M12.5 15H18v5h-5.500z" fill="#ffb902" /></Ic> },
  { el: <Ic w={24} h={20} vb="0 0 24 20"><path d="M0 6.500 12 0l12 6.500V20H0z" fill="#fff" /><path d="m1 6.300 20 0-7 6 4.500 2.700" fill="#02050b" /><path d="m1 6.300 12 6.200 5 2.500" stroke="#02050b" /></Ic> },
  { el: <Ic w={23} h={23} vb="0 0 23 23"><circle cx="11.5" cy="12.5" r="10.3" fill="#fb9a1e" /><path d="M2 8q-1 14 12 14.500 9-2 8.500-11Q22 4 15 0q-1 4 1 7-4-3-8 0Q4 6 4 3 2 5 2 8z" fill="#fe6a3a" /><path d="M15 0q-2 4 2 8 4 6-1 10 8-3 6-9-1-5-7-9z" fill="#ffd43b" /><path d="M2 14q1 8 10 8.500 6 0 9-5-8 4-13-1-3-4 0-6-4-1-6 3.500z" fill="#f23b5d" /><circle cx="12" cy="12.5" r="4.5" fill="#7a4be0" /></Ic> },
  { el: <Notepad s={23} />, line: true },
  { el: <Webex cam />, line: true },
  { el: <Gear s={24} sq />, line: true },
  { el: <Palette s={24} />, line: true },
  { el: <div className="relative"><Chrome s={22} /><div className="absolute top-[9px] left-[9px] h-[16px] w-[16px] overflow-hidden rounded-full"><Ic w={16} h={16}><path d="M0 0h16v16H0z" fill="#6d6a66" /><path d="M3 4q5-6 9 1l-1 5-6 1z" fill="#2c2724" /><path d="M5 6h5v5H5z" fill="#a58776" /><path d="m8 16 1-6 6-3v9z" fill="#1b49c8" /></Ic></div></div>, line: true },
];

const LocalTaskbar = () => (
  <div className="flex h-[40px] bg-[linear-gradient(#262626_8px,#02050b_8px)] text-white">
    <div className="flex w-[48px] items-center justify-center"><WinLogo s={16} /></div>
    <div className="flex w-[344px] items-center bg-[#333] pr-[14px] pl-[9px] text-[#aaa]">
      <div className="h-[22px] w-[22px] rounded-full border-[3px] border-[#eee]" />
      <span className="ml-[9px] pt-[1px] text-[14.5px] tracking-[-0.3px] whitespace-nowrap">Type here to search</span>
      <Ic w={12} h={17} vb="0 0 12 17" className="ml-auto"><path d="M3.5.5h5v11h-5zM.8 8v5.500h10.400V8M6 13.500v3M3 16.500h6" stroke="#aaa" /></Ic>
    </div>
    <div className="flex w-[50px] items-center justify-center pr-[1px]"><Ic w={20} h={14} vb="0 0 20 14"><path d="M4.5.5h11v13h-11zM3 2.500H.5v9H3M17 2.500h2.500v9H17" stroke="#fff" /></Ic></div>
    <div className="flex">
      {localApps.map((a, i) => (
        <div key={i} className="flex w-[49.1px] flex-col items-center">
          <div className="flex h-[37px] items-center pt-[3px]">{a.el}</div>
          {a.line && <div className="h-[3px] w-[40px] bg-[#76b9ed]" />}
        </div>
      ))}
    </div>
    <div className="ml-auto flex items-center">
      <Chev up w={12} h={7} c="#fff" />
      <Ic w={15} h={9} vb="0 0 15 9" className="ml-[11px]"><path d="M.5.5h12v8H.5zM14.5 3v3" stroke="#fff" /><path d="M2 2h6v5H2z" fill="#fff" /></Ic>
      <div className="ml-[7px]"><Speaker w={16} /></div>
      <div className="ml-[7px] w-[66px] text-center text-[12px] leading-[18px] tracking-[-0.35px] whitespace-nowrap">04:49 PM<br />22-02-2022</div>
      <Ic w={16} h={16} vb="0 0 16 16" className="ml-[14px]"><path d="M.6.6h14.800v12H10.500l-2.500 2.600-2.500-2.600H.6z" stroke="#fff" strokeWidth="1.2" /></Ic>
      <div className="mr-[4px] ml-[20px] h-[40px] w-px bg-[#555]" />
    </div>
  </div>
);

export default function App() {
  return (
    <div className="relative flex h-[768px] w-[1366px] flex-col overflow-hidden bg-white font-['Noto_Sans','Open_Sans',sans-serif]">
      <div className="flex h-[29px] items-center bg-[#ebebeb]">
        <div className="ml-[4px]"><Webex s={13} /></div>
        <span className="ml-[490px] text-[15px] tracking-[-0.45px] whitespace-nowrap text-[#999]">You are v</span>
        <div className="ml-auto flex items-center pr-[9px]">
          <div className="mt-[7px] h-[2px] w-[10px] bg-[#b0b0b0]" />
          <Ic w={12} h={12} vb="0 0 12 12" className="ml-[18px]"><path d="M1 4h7.500v6.500H1z" stroke="#b0b0b0" strokeWidth="1.5" /><path d="M3 1h8v7" stroke="#b0b0b0" strokeWidth="1.3" /></Ic>
          <Ic w={10} h={10} vb="0 0 10 10" className="ml-[18px]"><path d="m1 1 8 8m0-8-8 8" stroke="#b0b0b0" strokeWidth="2.2" /></Ic>
        </div>
      </div>
      <div className="flex h-[699px]">
        <div className="w-[1243px]"><PaintWindow /><RemoteTaskbar /></div>
        <div className="flex-1 bg-[#008080]" />
      </div>
      <LocalTaskbar />

      <Ic w={52} h={52} vb="0 0 52 52" className="absolute top-[646px] left-[1284px]">
        <circle cx="26" cy="26" r="26" fill="#006272" /><path d="M6 42A26 26 0 0 1 40 4L34 12 12 34z" fill="#07868f" />
        <circle cx="26" cy="26" r="17.5" fill="#639ea0" /><path d="M35 6Q36 32 11 35A17.500 17.500 0 0 0 43 24Q42 14 35 6z" fill="#2b875d" />
      </Ic>
      <ClockWindow />
      <Ic w={659} h={70} vb="0 0 659 70" className="absolute top-[29px] left-[292px]">
        <defs><pattern id="hatch" width="4" height="4" patternUnits="userSpaceOnUse">
          <rect width="4" height="4" fill="#7e7e82" />
          <path d="M-1-1 5 5M-1 5 5-1" stroke="#dcdc1c" strokeWidth=".85" />
        </pattern></defs>
        <path d="M0 0h659v48H429v22H231V48H0z" fill="url(#hatch)" />
      </Ic>
      <div className="absolute top-0 left-[561px] flex h-[26px] w-[244px] items-center bg-[#079fda] pl-[15px] text-[10.5px] whitespace-nowrap text-white">
        <span className="w-[179px] shrink-0 pt-[1px] tracking-[-0.22px]">Viewing Virendra Sharma's desktop</span>
        <Ic w={25} h={17} vb="0 0 25 17"><path d="M1 1.500h15v10.500H1z" stroke="#fff" strokeWidth="2" /><path d="M4 8q4.500-4 9 0" stroke="#fff" strokeWidth="2" /><path d="M5.5 15.500h6" stroke="#fff" strokeWidth="2" /><path d="m19.5 1.500 4.500 4.500m0-4.500-4.500 4.500" stroke="#f04e4e" strokeWidth="1.6" /></Ic>
        <div className="ml-[6px] h-[9px] w-[9px] shrink-0 rounded-full border border-white bg-[#f9432b]" />
      </div>
      <Ic w={9} h={14} vb="0 0 9 14" className="absolute top-[101px] left-[810px]"><path d="M.5.8v11l2.500-2.300 1.800 4 1.500-.7-1.700-3.800H8z" fill="#fff" stroke="#444" strokeWidth=".8" /></Ic>
      <Chat />
    </div>
  );
}
